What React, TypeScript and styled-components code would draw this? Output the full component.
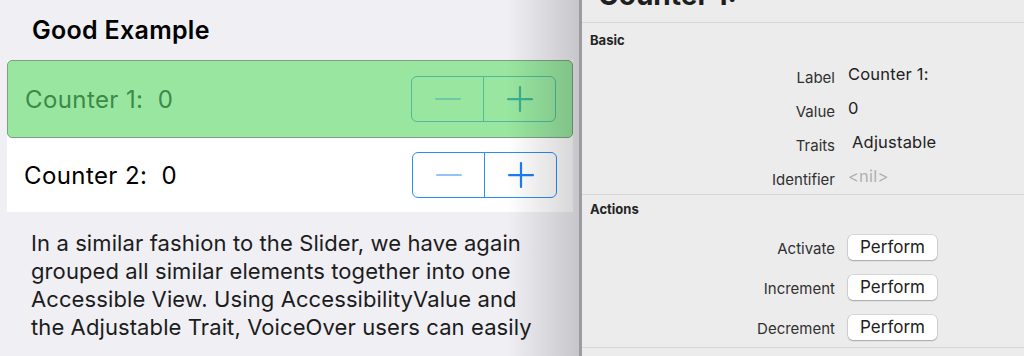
import React from 'react';
import styled, { createGlobalStyle } from 'styled-components';

const GlobalStyle = createGlobalStyle`
  html, body {
    margin: 0;
    padding: 0;
    height: 356px;
    overflow: hidden;
    background: #ececec;
  }
  * { box-sizing: border-box; }
`;

const Screen = styled.div`
  display: flex;
  width: 1024px;
  height: 356px;
  font-family: Inter, "Noto Sans", "Liberation Sans", sans-serif;
`;

const Simulator = styled.div`
  position: relative;
  width: 582px;
  flex-shrink: 0;
  background: #efeff4;
  border-right: 3px solid #9c9c9f;
  overflow: hidden;

  &::after {
    content: '';
    position: absolute;
    top: 0;
    right: 0;
    bottom: 0;
    width: 72px;
    background: linear-gradient(to right, rgba(0, 0, 0, 0), rgba(0, 0, 0, 0.17));
    pointer-events: none;
  }
`;

const SectionTitle = styled.div`
  height: 60px;
  display: flex;
  align-items: center;
  padding: 0 0 1px 32px;
  font-size: 25px;
  font-weight: 600;
  color: #000;
  letter-spacing: 0.3px;
`;

const Rows = styled.div`
  margin: 0 6px 0 7px;
  background: #fff;
`;

const CounterRow = styled.div<{ $focused?: boolean }>`
  display: flex;
  align-items: center;
  justify-content: space-between;
  padding: 0 16px 0 17px;
  height: ${p => (p.$focused ? 78 : 74)}px;
  background: ${p => (p.$focused ? '#98e6a0' : '#fff')};
  border: ${p => (p.$focused ? '1px solid #7f9f82' : 'none')};
  border-radius: ${p => (p.$focused ? 5 : 0)}px;
`;

const CounterText = styled.span<{ $focused?: boolean }>`
  font-size: 24px;
  white-space: pre;
  color: ${p => (p.$focused ? '#3d8a48' : '#000')};
  letter-spacing: 0.4px;
`;

const Stepper = styled.div<{ $focused?: boolean }>`
  display: flex;
  width: 145px;
  height: 46px;
  border: 1.5px solid ${p => (p.$focused ? '#4fb99a' : '#2b8cf8')};
  border-radius: 6px;
  overflow: hidden;
`;

const StepButton = styled.div<{ $focused?: boolean; $divider?: boolean }>`
  flex: 1;
  display: flex;
  align-items: center;
  justify-content: center;
  border-right: ${p => (p.$divider ? `1.5px solid ${p.$focused ? '#4fb99a' : '#2b8cf8'}` : 'none')};
`;

const Paragraph = styled.p`
  margin: 17px 0 0 31px;
  font-size: 22px;
  line-height: 28px;
  color: #1c1c1c;
  letter-spacing: 0.1px;
  white-space: nowrap;
`;

const Inspector = styled.div`
  flex: 1;
  background: #ececec;
  color: #262626;
`;

const InspectorHeading = styled.div`
  height: 23px;
  overflow: hidden;
  border-bottom: 1.5px solid #d6d6d6;
  padding-left: 16px;
`;

const HeadingText = styled.div`
  margin-top: -19px;
  font-size: 28px;
  line-height: 28px;
  font-weight: 700;
  color: #1e1e1e;
`;

const Section = styled.div<{ $top: number; $rowsGap: number }>`
  padding-top: ${p => p.$top}px;
  border-bottom: 1.5px solid #d6d6d6;

  & > div:first-child + div {
    margin-top: ${p => p.$rowsGap}px;
  }
`;

const SectionLabel = styled.div`
  padding-left: 8px;
  font-size: 13px;
  line-height: 16px;
  font-weight: 700;
  color: #242424;
`;

const PropGrid = styled.div<{ $rowHeight: number }>`
  display: grid;
  grid-template-columns: 253px 1fr;
  grid-auto-rows: ${p => p.$rowHeight}px;
  column-gap: 13px;
  align-items: center;
`;

const PropName = styled.div`
  text-align: right;
  font-size: 15px;
  color: #303030;
  padding-top: 4px;
`;

const PropValue = styled.div<{ $muted?: boolean; $indent?: number }>`
  font-size: 16.5px;
  color: ${p => (p.$muted ? '#b0b0b0' : '#222')};
  padding-left: ${p => p.$indent ?? 0}px;
  padding-bottom: 3px;
  letter-spacing: 0.2px;
`;

const PerformButton = styled.div`
  width: 89px;
  height: 25px;
  display: flex;
  align-items: center;
  justify-content: center;
  background: #fff;
  border-radius: 5px;
  box-shadow: 0 0 0 0.5px rgba(0, 0, 0, 0.18), 0 1px 1.5px rgba(0, 0, 0, 0.22);
  font-size: 17px;
  color: #222;
`;

const ActionName = styled.div`
  text-align: right;
  font-size: 15px;
  color: #303030;
  padding-top: 2px;
`;

const Minus = ({ color }: { color: string }) => (
  <svg width="26" height="4" viewBox="0 0 26 4">
    <rect x="0" y="1" width="26" height="2" rx="1" fill={color} />
  </svg>
);

const Plus = ({ color }: { color: string }) => (
  <svg width="26" height="26" viewBox="0 0 26 26">
    <rect x="0" y="12" width="26" height="2.2" rx="1" fill={color} />
    <rect x="11.9" y="0" width="2.2" height="26" rx="1" fill={color} />
  </svg>
);

const Counter = ({ label, focused }: { label: string; focused?: boolean }) => (
  <CounterRow $focused={focused}>
    <CounterText $focused={focused}>{label}</CounterText>
    <Stepper $focused={focused}>
      <StepButton $focused={focused} $divider>
        <Minus color={focused ? '#6ccaa4' : '#93c3f7'} />
      </StepButton>
      <StepButton $focused={focused}>
        <Plus color={focused ? '#3bb08f' : '#1a7ff5'} />
      </StepButton>
    </Stepper>
  </CounterRow>
);

const basicProps = [
  { name: 'Label', value: 'Counter 1:' },
  { name: 'Value', value: '0' },
  { name: 'Traits', value: 'Adjustable', indent: 4 },
  { name: 'Identifier', value: '<nil>', muted: true },
];

const actions = ['Activate', 'Increment', 'Decrement'];

export default function App() {
  return (
    <>
      <GlobalStyle />
      <Screen>
        <Simulator>
          <SectionTitle>Good Example</SectionTitle>
          <Rows>
            <Counter label="Counter 1:  0" focused />
            <Counter label="Counter 2:  0" />
          </Rows>
          <Paragraph>
            In a similar fashion to the Slider, we have again
            <br />
            grouped all similar elements together into one
            <br />
            Accessible View. Using AccessibilityValue and
            <br />
            the Adjustable Trait, VoiceOver users can easily
          </Paragraph>
        </Simulator>
        <Inspector>
          <InspectorHeading>
            <HeadingText>Counter 1:</HeadingText>
          </InspectorHeading>
          <Section $top={9} $rowsGap={10}>
            <SectionLabel>Basic</SectionLabel>
            <PropGrid $rowHeight={34}>
              {basicProps.map(p => (
                <React.Fragment key={p.name}>
                  <PropName>{p.name}</PropName>
                  <PropValue $muted={p.muted} $indent={p.indent}>{p.value}</PropValue>
                </React.Fragment>
              ))}
            </PropGrid>
          </Section>
          <Section $top={6} $rowsGap={10}>
            <SectionLabel>Actions</SectionLabel>
            <PropGrid $rowHeight={40}>
              {actions.map(a => (
                <React.Fragment key={a}>
                  <ActionName>{a}</ActionName>
                  <PerformButton>Perform</PerformButton>
                </React.Fragment>
              ))}
            </PropGrid>
          </Section>
        </Inspector>
      </Screen>
    </>
  );
}
